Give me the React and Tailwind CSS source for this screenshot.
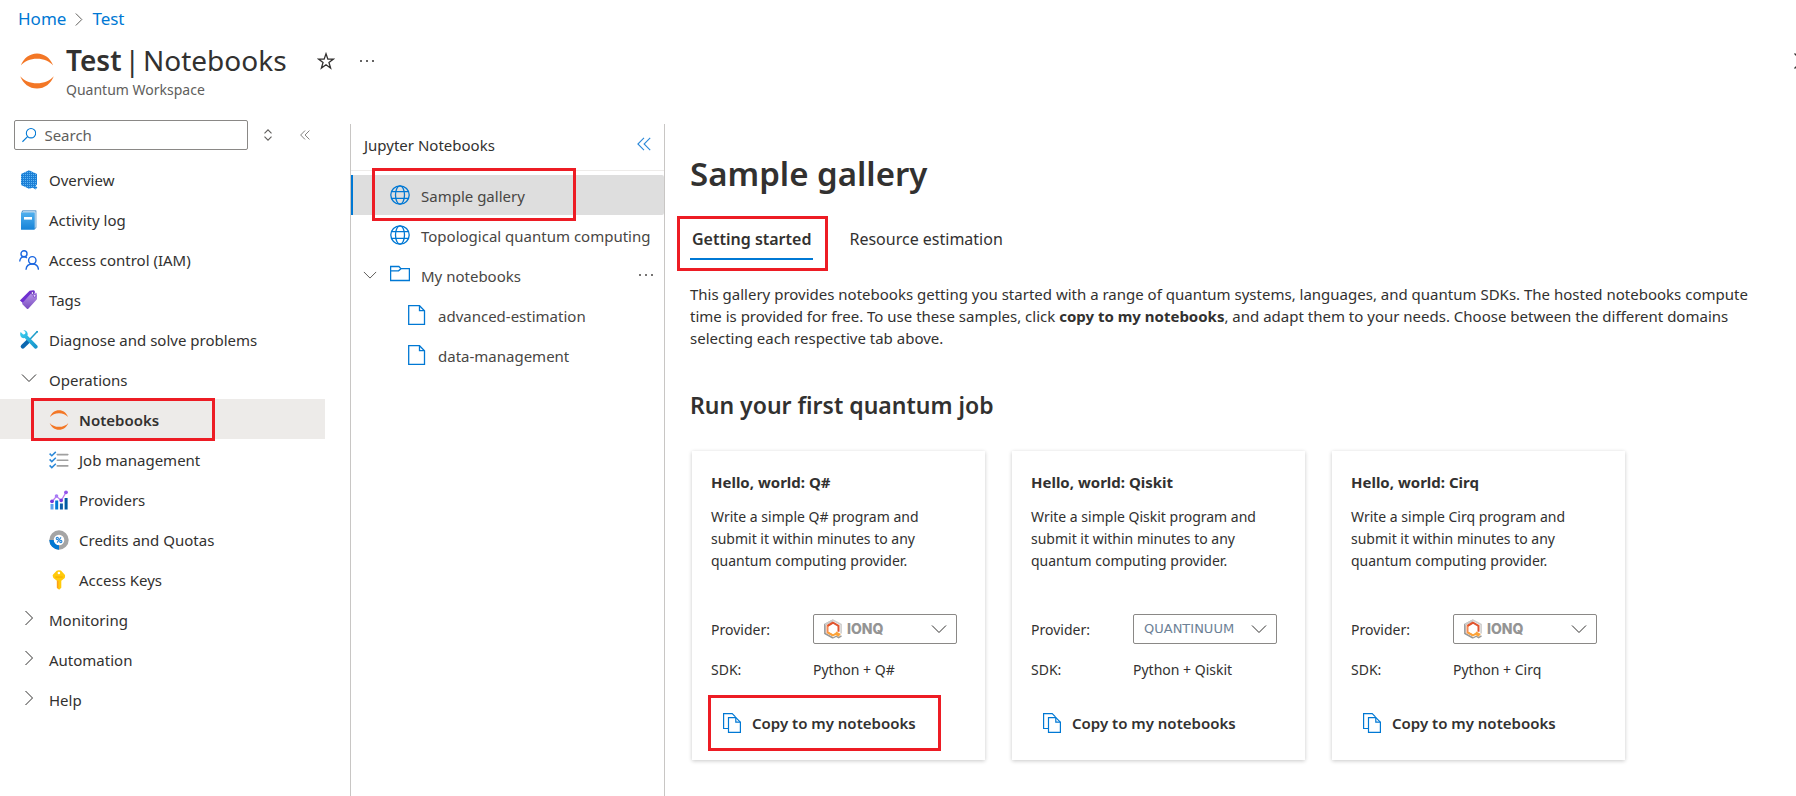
import React from 'react';

/* ---------- icons ---------- */

function Chevron({ dir = 'down', className = '', size = 16 }) {
  const d = {
    down: 'M1 4.5 8 11.5 15 4.5',
    right: 'M4.5 1 11.5 8 4.5 15',
  }[dir];
  return (
    <svg viewBox="0 0 16 16" width={size} height={size} fill="none" stroke="currentColor" strokeWidth="1" className={className} aria-hidden="true">
      <path d={d} />
    </svg>
  );
}

function CrumbChevron() {
  return (
    <svg viewBox="0 0 8 13" width="8" height="13" fill="none" stroke="#605e5c" strokeWidth="1" aria-hidden="true">
      <path d="M.8.5 6.800 6.500.8 12.500" />
    </svg>
  );
}

function DoubleLeft({ size }) {
  return (
    <svg viewBox="0 0 14 14" width={size} height={size} fill="none" stroke="currentColor" strokeWidth="1.1" aria-hidden="true">
      <path d="M7 .8.9 7 7 13.2M13.2.8 7.1 7l6.1 6.2" />
    </svg>
  );
}

function Dots({ className = '' }) {
  return (
    <svg viewBox="0 0 16 4" width="16" height="4" fill="currentColor" className={className} aria-hidden="true">
      <circle cx="2" cy="2" r="1" />
      <circle cx="8" cy="2" r="1" />
      <circle cx="14" cy="2" r="1" />
    </svg>
  );
}

function Jupyter({ size }) {
  return (
    <svg viewBox="0 0 34 36" width={size} height={size} fill="#f37726" aria-hidden="true">
      <path d="M.8 12.6C3.4 5.400 9.600.5 17 .5s13.600 4.900 16.200 12.100C29.600 8.400 23.700 5.800 17 5.800S4.400 8.400.8 12.600Z" />
      <path d="M.2 23.200C3 30.500 9.300 35.500 17 35.500s14-5 16.800-12.300C30 27.600 23.900 30.200 17 30.200S4 27.600.2 23.200Z" />
    </svg>
  );
}

function Star() {
  return (
    <svg viewBox="0 0 18 18" width="18" height="18" fill="none" stroke="#323130" strokeWidth="1.3" aria-hidden="true">
      <path d="m9 1.800 1.850 5.300h5.600l-4.500 3.400 1.650 5.600L9 12.800l-4.600 3.300 1.650-5.600-4.500-3.400h5.600Z" />
    </svg>
  );
}

function Magnifier() {
  return (
    <svg viewBox="0 0 16 16" width="16" height="16" fill="none" stroke="#0078d4" strokeWidth="1.200" aria-hidden="true">
      <circle cx="10" cy="6" r="5.200" />
      <path d="M6.200 9.800.5 15.500" />
    </svg>
  );
}

function QuantumIcon() {
  return (
    <svg viewBox="0 0 20 20" width="20" height="20" aria-hidden="true">
      <defs>
        <pattern id="mesh" width="2" height="2" patternUnits="userSpaceOnUse">
          <rect width="2" height="2" fill="#1c7fd6" />
          <rect width="1" height="1" fill="#5fb6f2" />
        </pattern>
      </defs>
      <path d="M10 .2 18 4v10.600l-1 .8v.8l1.300 1.200-1.700 2-2.900-1.700L10 18.800 2 15V4Z" fill="url(#mesh)" />
    </svg>
  );
}

function BookIcon() {
  return (
    <svg viewBox="0 0 20 20" width="20" height="20" aria-hidden="true">
      <defs>
        <linearGradient id="book" x1="0" y1="0" x2="0" y2="1">
          <stop offset="0" stopColor="#50b0ee" />
          <stop offset="1" stopColor="#1683d8" />
        </linearGradient>
      </defs>
      <path d="M3.500.5h13.800v17.300l-2 1.700V2.500H2.200Z" fill="#1b6fb5" />
      <path d="M3.800 1.200h12.900v16.400l-1.200.8V2.600H3Z" fill="#dff1fd" />
      <rect x="2" y="2.500" width="13.600" height="17.300" rx=".6" fill="url(#book)" />
      <rect x="5" y="7" width="8" height="2.600" fill="#fff" />
    </svg>
  );
}

function PeopleIcon() {
  return (
    <svg viewBox="0 0 20 20" width="20" height="20" fill="none" stroke="#1a66e0" strokeWidth="1.400" aria-hidden="true">
      <circle cx="5" cy="3.800" r="3" />
      <path d="M.7 11.500C1 8.700 2.600 6.900 5 6.900c1.200 0 2.200.4 2.900 1.100" />
      <circle cx="13.300" cy="10.300" r="3.700" />
      <path d="M7 19.700c.3-3.500 2.900-5.700 6.300-5.700s5.900 2.200 6.200 5.700" />
    </svg>
  );
}

function TagIcon() {
  return (
    <svg viewBox="0 0 20 20" width="20" height="20" aria-hidden="true">
      <defs>
        <linearGradient id="tag" x1="0" y1="0" x2="0" y2="1">
          <stop offset="0" stopColor="#b796e8" />
          <stop offset="1" stopColor="#7a4cc0" />
        </linearGradient>
      </defs>
      <path d="M10.600.8 14.500.2q1 0 1.200 1L16 4 5.500 14.600.9 10.600Z" fill="#6f2fd0" />
      <path d="M12.200 3.200 17 2.800q1 .1 1 1.100v4.700q0 .7-.5 1.200l-8.200 8.900q-.7.600-1.400 0l-4.500-4.500q-.5-.7 0-1.300Z" fill="url(#tag)" />
      <circle cx="13.400" cy="3" r="1.300" fill="#fff" stroke="#5a27ad" strokeWidth=".8" />
      <circle cx="15.600" cy="5.800" r="1.400" fill="#e9dcfb" stroke="#6f3bc0" strokeWidth=".8" />
    </svg>
  );
}

function ToolsIcon() {
  return (
    <svg viewBox="0 0 20 20" width="20" height="20" aria-hidden="true">
      <defs>
        <linearGradient id="wrench" x1="0" y1="0" x2="1" y2="1">
          <stop offset="0" stopColor="#3ad0f0" />
          <stop offset="1" stopColor="#1490c8" />
        </linearGradient>
      </defs>
      <path d="m18.500 1.200-8 8.600" stroke="#1f9ecb" strokeWidth="1.500" />
      <path d="m17 .9 2 .2-.1 2Z" fill="#1f9ecb" />
      <path d="m9.200 11.200-5.400 5.400" stroke="#0b67b0" strokeWidth="4.200" strokeLinecap="round" />
      <path d="M1.300 5.200C1 3.600 1.300 2.600 1.700 1.900l2.500 2.500 1.900-.5.400-1.800L4.300.3c2.300-.3 4.300 1.400 4.400 3.600 0 .6-.1 1.200-.3 1.700l9.800 10c1.500 1.700-.8 4.300-2.700 2.600L5.700 8.100C3.800 8.500 1.700 7.300 1.300 5.200Z" fill="url(#wrench)" />
    </svg>
  );
}

function ChecklistIcon() {
  return (
    <svg viewBox="0 0 20 20" width="20" height="20" fill="none" aria-hidden="true">
      <g stroke="#a0a0a0" strokeWidth="1.600" strokeLinecap="round">
        <path d="M8.300 4.600h10.500M8.300 10.200h10.500M8.300 15.900h10.500" />
      </g>
      <g stroke="#2b88d8" strokeWidth="1.500">
        <path d="m.6 3.600 2.200 2.200L6.800 1.900M.6 9.400l2.200 2.200 4-3.900M.6 15.400l2.200 2.200 4-3.900" />
      </g>
    </svg>
  );
}

function ChartIcon() {
  return (
    <svg viewBox="0 0 20 20" width="20" height="20" aria-hidden="true">
      <rect x="1.500" y="14" width="3" height="5.500" fill="#5ea0ef" />
      <rect x="6.200" y="10.500" width="3" height="9" fill="#0078d4" />
      <rect x="10.900" y="13.500" width="3" height="6" fill="#0f5fa8" />
      <rect x="15.600" y="8" width="3" height="11.500" fill="#005ba1" />
      <path d="m3 11.500 4.500-5.200 4.800 4.200L17 2.300" fill="none" stroke="#b77af4" strokeWidth="1.300" />
      <circle cx="3" cy="11.300" r="1.900" fill="#773adc" />
      <circle cx="7.500" cy="6" r="1.800" fill="#a67af4" />
      <circle cx="12.200" cy="10.400" r="1.800" fill="#773adc" />
      <circle cx="17" cy="2.300" r="1.900" fill="#9455ea" />
    </svg>
  );
}

function QuotaIcon() {
  return (
    <svg viewBox="0 0 20 20" width="20" height="20" aria-hidden="true">
      <circle cx="10" cy="10" r="7.500" fill="#fff" stroke="#a5a5a5" strokeWidth="4.400" />
      <path d="M2.500 10A7.500 7.500 0 0 0 10 17.500" fill="none" stroke="#0078d4" strokeWidth="4.400" />
      <g fill="none" stroke="#2b88d8" strokeWidth="1.100">
        <circle cx="8.300" cy="8.500" r="1.100" />
        <circle cx="11.800" cy="11.500" r="1.100" />
        <path d="m12 7.400-3.900 5.200" />
      </g>
    </svg>
  );
}

function KeyIcon() {
  return (
    <svg viewBox="0 0 20 20" width="20" height="20" aria-hidden="true">
      <path d="m9.700.3 2.200.2 3.700 3.900q.6.700.5 1.500l-.3 2-3.500 2.800v7l-2.200 2.100-2.200-2v-7.100L4.400 8l-.7-1.900q-.2-.8.4-1.500L7.700.7Z" fill="#ffca0a" />
      <path d="M7.900 10.700h1.500v8.300l-1.500-1.300Z" fill="#ff9f1a" />
      <path d="M6.300 6.600h7.400v.9H6.300z" fill="#f5a300" />
      <circle cx="9.900" cy="3" r="1.300" fill="#fff" />
    </svg>
  );
}

function Globe() {
  return (
    <svg viewBox="0 0 20 20" width="20" height="20" fill="none" stroke="#0078d4" strokeWidth="1.300" aria-hidden="true">
      <circle cx="10" cy="10" r="9.200" />
      <ellipse cx="10" cy="10" rx="4.500" ry="9.200" />
      <path d="M1.700 6.700h16.600M1.700 13.300h16.600" />
    </svg>
  );
}

function Folder() {
  return (
    <svg viewBox="0 0 20 20" width="20" height="20" fill="none" stroke="#0078d4" strokeWidth="1.300" aria-hidden="true">
      <path d="M.6 15.500V1.500h8.300l2 2.200h8.500v11.800Z" />
      <path d="M.6 5.800h8l2.300-2.100" />
    </svg>
  );
}

function FileIcon() {
  return (
    <svg viewBox="0 0 18 20" width="18" height="20" fill="none" stroke="#0078d4" strokeWidth="1.300" aria-hidden="true">
      <path d="M.7.700h10.800l5 5v13.600H.7Z" />
      <path d="M11.500.7v5h5" />
    </svg>
  );
}

function CopyIcon() {
  return (
    <svg viewBox="0 0 18 20" width="18" height="20" fill="none" stroke="#0078d4" strokeWidth="1.200" aria-hidden="true">
      <path d="M5.500 15.500H.6V.6h8.600l3.300 3.300" />
      <path d="M5.500 4.600h7.300l4.600 4.600v10.200H5.500Z" />
      <path d="M12.800 4.600v4.600h4.600" />
    </svg>
  );
}

function IonqMark() {
  return (
    <svg viewBox="0 0 20 20" width="20" height="20" fill="none" aria-hidden="true">
      <path d="M10 1.200 1.900 5.500v9L10 19" stroke="#979797" strokeWidth="1.600" />
      <path d="M1.900 5.500 10 1.100l8.100 4.400v9" stroke="#cfcfcf" strokeWidth="1.600" />
      <path d="M10 19l3.200-1.800 2.400 1.400 2.900-1.800" stroke="#9a9a9a" strokeWidth="1.400" />
      <path d="M10 3.700 4.500 6.800v6.600L10 16.500" stroke="#f58a55" strokeWidth="2" />
      <path d="M4.500 6.800 10 3.700l5.500 3.100v6" stroke="#e0552f" strokeWidth="2" />
      <path d="M4.500 13.200 10 16.400l2.600-1.500 3.500 2.100M13 13.200l4.300 2.500" stroke="#fba33a" strokeWidth="1.800" />
    </svg>
  );
}

/* ---------- shared pieces ---------- */

const outline = 'pointer-events-none absolute z-10 border-3 border-[#ed1c24]';

function NavItem({ icon, label, child, selected }) {
  return (
    <li className="relative">
      <a
        href="#"
        aria-current={selected ? 'page' : undefined}
        className={`flex h-10 items-center gap-2.5 pt-0.5 ${child ? 'pl-[49px]' : 'pl-[19px]'} ${selected ? 'bg-[#edebe9] font-semibold' : ''}`}
      >
        <span className="flex w-5 shrink-0 justify-center">{icon}</span>
        <span>{label}</span>
      </a>
      {selected && <span className={`${outline} -top-px left-[31px] h-[43px] w-[184px]`} />}
    </li>
  );
}

function NavGroup({ label, open, children }) {
  return (
    <li>
      <button type="button" aria-expanded={!!open} className="flex h-10 w-full items-center gap-2.5 pt-0.5 pl-[19px] text-left">
        <span className="flex w-5 shrink-0 justify-center pb-1 text-[#323130]">
          <Chevron dir={open ? 'down' : 'right'} />
        </span>
        <span>{label}</span>
      </button>
      {children && <ul>{children}</ul>}
    </li>
  );
}

function SampleCard({ id, name, provider, highlight }) {
  const ionq = provider === 'IONQ';
  return (
    <article className="w-[293px] bg-white px-[19px] pt-5 pb-[22px] shadow-[0_1px_4px_rgba(0,0,0,0.22)]">
      <h3 className="text-[15px] leading-[22px] font-bold">{`Hello, world: ${name}`}</h3>
      <p className="mt-[13px] pr-6 leading-[22px]">
        {`Write a simple ${name} program and submit it within minutes to any quantum computing provider.`}
      </p>
      <div className="mt-[42px] grid grid-cols-[102px_144px] items-center gap-y-[15px] leading-[22px]">
        <label htmlFor={id} className="pt-0.5">
          Provider:
        </label>
        <div className="relative flex items-center">
          {ionq && (
            <span className="pointer-events-none absolute left-2.5">
              <IonqMark />
            </span>
          )}
          <select
            id={id}
            defaultValue={provider}
            className={
              ionq
                ? 'h-[30px] w-full appearance-none rounded-xs border border-[#8a8886] bg-white pl-[33px] font-[Inter,sans-serif] text-[14px] font-extrabold text-[#949494]'
                : "h-[30px] w-full appearance-none rounded-xs border border-[#8a8886] bg-white pl-2.5 font-['DejaVu_Sans',sans-serif] text-[13px] text-[#6d8196]"
            }
          >
            <option>{provider}</option>
          </select>
          <Chevron className="pointer-events-none absolute right-2.5 text-[#323130]" />
        </div>
        <span>SDK:</span>
        <span>{`Python + ${name}`}</span>
      </div>
      <div className="relative mt-[27px]">
        <button type="button" className="flex h-[30px] items-center gap-[11px] pl-3 text-[15px] font-semibold">
          <CopyIcon />
          Copy to my notebooks
        </button>
        {highlight && <span className={`${outline} -top-[13px] -left-[3px] h-14 w-[233px]`} />}
      </div>
    </article>
  );
}

/* ---------- page ---------- */

export default function App() {
  return (
    <div className="flex min-h-screen flex-col overflow-hidden bg-white font-['Noto_Sans','Open_Sans',sans-serif] text-[15px] leading-5 text-[#323130]">
      <nav aria-label="Breadcrumb" className="flex h-[38px] items-center gap-[9px] pl-[18px] text-[17px] text-[#0078d4]">
        <a href="#">Home</a>
        <CrumbChevron />
        <a href="#">Test</a>
      </nav>

      <header className="flex h-[72px] items-start pt-1 pl-[19px]">
        <div className="flex items-center gap-[11px]">
          <Jupyter size={36} />
          <div>
            <div className="flex items-center">
              <h1 className="flex gap-[3px] pb-0.5 text-[28px] leading-9">
                <strong className="font-semibold">Test</strong>
                <span>|</span>
                <span>Notebooks</span>
              </h1>
              <button type="button" aria-label="Add to favorites" className="ml-[30px]">
                <Star />
              </button>
              <button type="button" aria-label="More" className="ml-6">
                <Dots />
              </button>
            </div>
            <p className="text-[14px] text-[#605e5c]">Quantum Workspace</p>
          </div>
        </div>
        <button type="button" aria-label="Close" className="-mr-3.5 ml-auto flex h-[38px] shrink-0 items-center">
          <svg viewBox="0 0 16 16" width="16" height="16" stroke="#323130" strokeWidth="1.300" aria-hidden="true">
            <path d="m.5.500 15 15m0-15-15 15" />
          </svg>
        </button>
      </header>

      <div className="flex flex-1">
        <aside className="w-[350px] shrink-0 pt-2.5">
          <div className="flex items-center pl-3.5">
            <label className="flex h-[30px] w-[234px] items-center gap-2 rounded-xs border border-[#8a8886] pl-[7px]">
              <Magnifier />
              <input
                type="text"
                aria-label="Search"
                placeholder="Search"
                className="w-full min-w-0 outline-none placeholder:text-[#605e5c]"
              />
            </label>
            <button type="button" aria-label="Expand or collapse all" className="ml-4 text-[#605e5c]">
              <svg viewBox="0 0 8 12" width="8" height="12" fill="none" stroke="currentColor" strokeWidth="1.100" aria-hidden="true">
                <path d="M.5 4.300 4 .8l3.500 3.500M.5 7.700 4 11.200l3.500-3.500" />
              </svg>
            </button>
            <button type="button" aria-label="Collapse menu" className="ml-7 text-[#605e5c]">
              <DoubleLeft size={10} />
            </button>
          </div>
          <ul className="mt-[9px] w-[325px]">
            <NavItem icon={<QuantumIcon />} label="Overview" />
            <NavItem icon={<BookIcon />} label="Activity log" />
            <NavItem icon={<PeopleIcon />} label="Access control (IAM)" />
            <NavItem icon={<TagIcon />} label="Tags" />
            <NavItem icon={<ToolsIcon />} label="Diagnose and solve problems" />
            <NavGroup label="Operations" open>
              <NavItem child selected icon={<Jupyter size={20} />} label="Notebooks" />
              <NavItem child icon={<ChecklistIcon />} label="Job management" />
              <NavItem child icon={<ChartIcon />} label="Providers" />
              <NavItem child icon={<QuotaIcon />} label="Credits and Quotas" />
              <NavItem child icon={<KeyIcon />} label="Access Keys" />
            </NavGroup>
            <NavGroup label="Monitoring" />
            <NavGroup label="Automation" />
            <NavGroup label="Help" />
          </ul>
        </aside>

        <section className="mt-3.5 w-[315px] shrink-0 border-x border-[#c8c6c4]">
          <div className="flex h-[47px] items-center justify-between border-b border-[#edebe9] pr-[13px] pb-1 pl-[13px]">
            <h2>Jupyter Notebooks</h2>
            <button type="button" aria-label="Collapse panel" className="pb-0.5 text-[#2b88d8]">
              <DoubleLeft size={14} />
            </button>
          </div>
          <ul className="mt-1 text-[#484644]">
            <li className="relative">
              <a href="#" className="flex h-10 items-center gap-[11px] rounded-r-xs border-l-2 border-[#0078d4] bg-[#dedede] pl-[37px]">
                <Globe />
                <span className="pt-0.5">Sample gallery</span>
              </a>
              <span className={`${outline} -top-[7px] left-[21px] h-[53px] w-[204px]`} />
            </li>
            <li>
              <a href="#" className="flex h-10 items-center gap-[11px] pl-[39px] whitespace-nowrap">
                <Globe />
                <span className="pt-0.5">Topological quantum computing</span>
              </a>
            </li>
            <li>
              <div className="flex h-10 items-center pr-2.5 pl-3">
                <button type="button" aria-expanded="true" className="flex items-center">
                  <Chevron size={14} className="mr-[13px]" />
                  <Folder />
                  <span className="ml-[11px] pt-0.5">My notebooks</span>
                </button>
                <button type="button" aria-label="More" className="ml-auto">
                  <Dots />
                </button>
              </div>
              <ul>
                {['advanced-estimation', 'data-management'].map((name) => (
                  <li key={name}>
                    <a href="#" className="flex h-10 items-center gap-3 pl-[57px]">
                      <FileIcon />
                      <span className="pt-0.5">{name}</span>
                    </a>
                  </li>
                ))}
              </ul>
            </li>
          </ul>
        </section>

        <main className="min-w-0 flex-1 pt-[42px] pr-7 pb-9 pl-[25px]">
          <h2 className="text-[33px] leading-[44px] font-semibold">Sample gallery</h2>
          <div role="tablist" className="mt-[22px] flex h-[42px] items-stretch gap-7">
            <div className="relative flex">
              <button type="button" role="tab" aria-selected="true" className="border-b-2 border-[#0078d4] px-0.5 pt-0.5 text-[16px] font-semibold">
                Getting started
              </button>
              <span className={`${outline} -top-0.5 -left-[13px] h-[55px] w-[151px]`} />
            </div>
            <button type="button" role="tab" aria-selected="false" className="border-b-2 border-transparent px-2 pt-0.5 text-[16px]">
              Resource estimation
            </button>
          </div>
          <p className="mt-[23px] leading-[22px]">
            This gallery provides notebooks getting you started with a range of quantum systems, languages, and quantum SDKs. The hosted
            notebooks compute time is provided for free. To use these samples, click <strong className="font-bold">copy to my notebooks</strong>,
            and adapt them to your needs. Choose between the different domains selecting each respective tab above.
          </p>
          <h3 className="mt-10 text-[23px] leading-8 font-semibold">Run your first quantum job</h3>
          <div className="mt-[30px] flex flex-wrap gap-[27px] px-0.5 text-[14px]">
            <SampleCard id="provider-qsharp" name="Q#" provider="IONQ" highlight />
            <SampleCard id="provider-qiskit" name="Qiskit" provider="QUANTINUUM" />
            <SampleCard id="provider-cirq" name="Cirq" provider="IONQ" />
          </div>
        </main>
      </div>
    </div>
  );
}
